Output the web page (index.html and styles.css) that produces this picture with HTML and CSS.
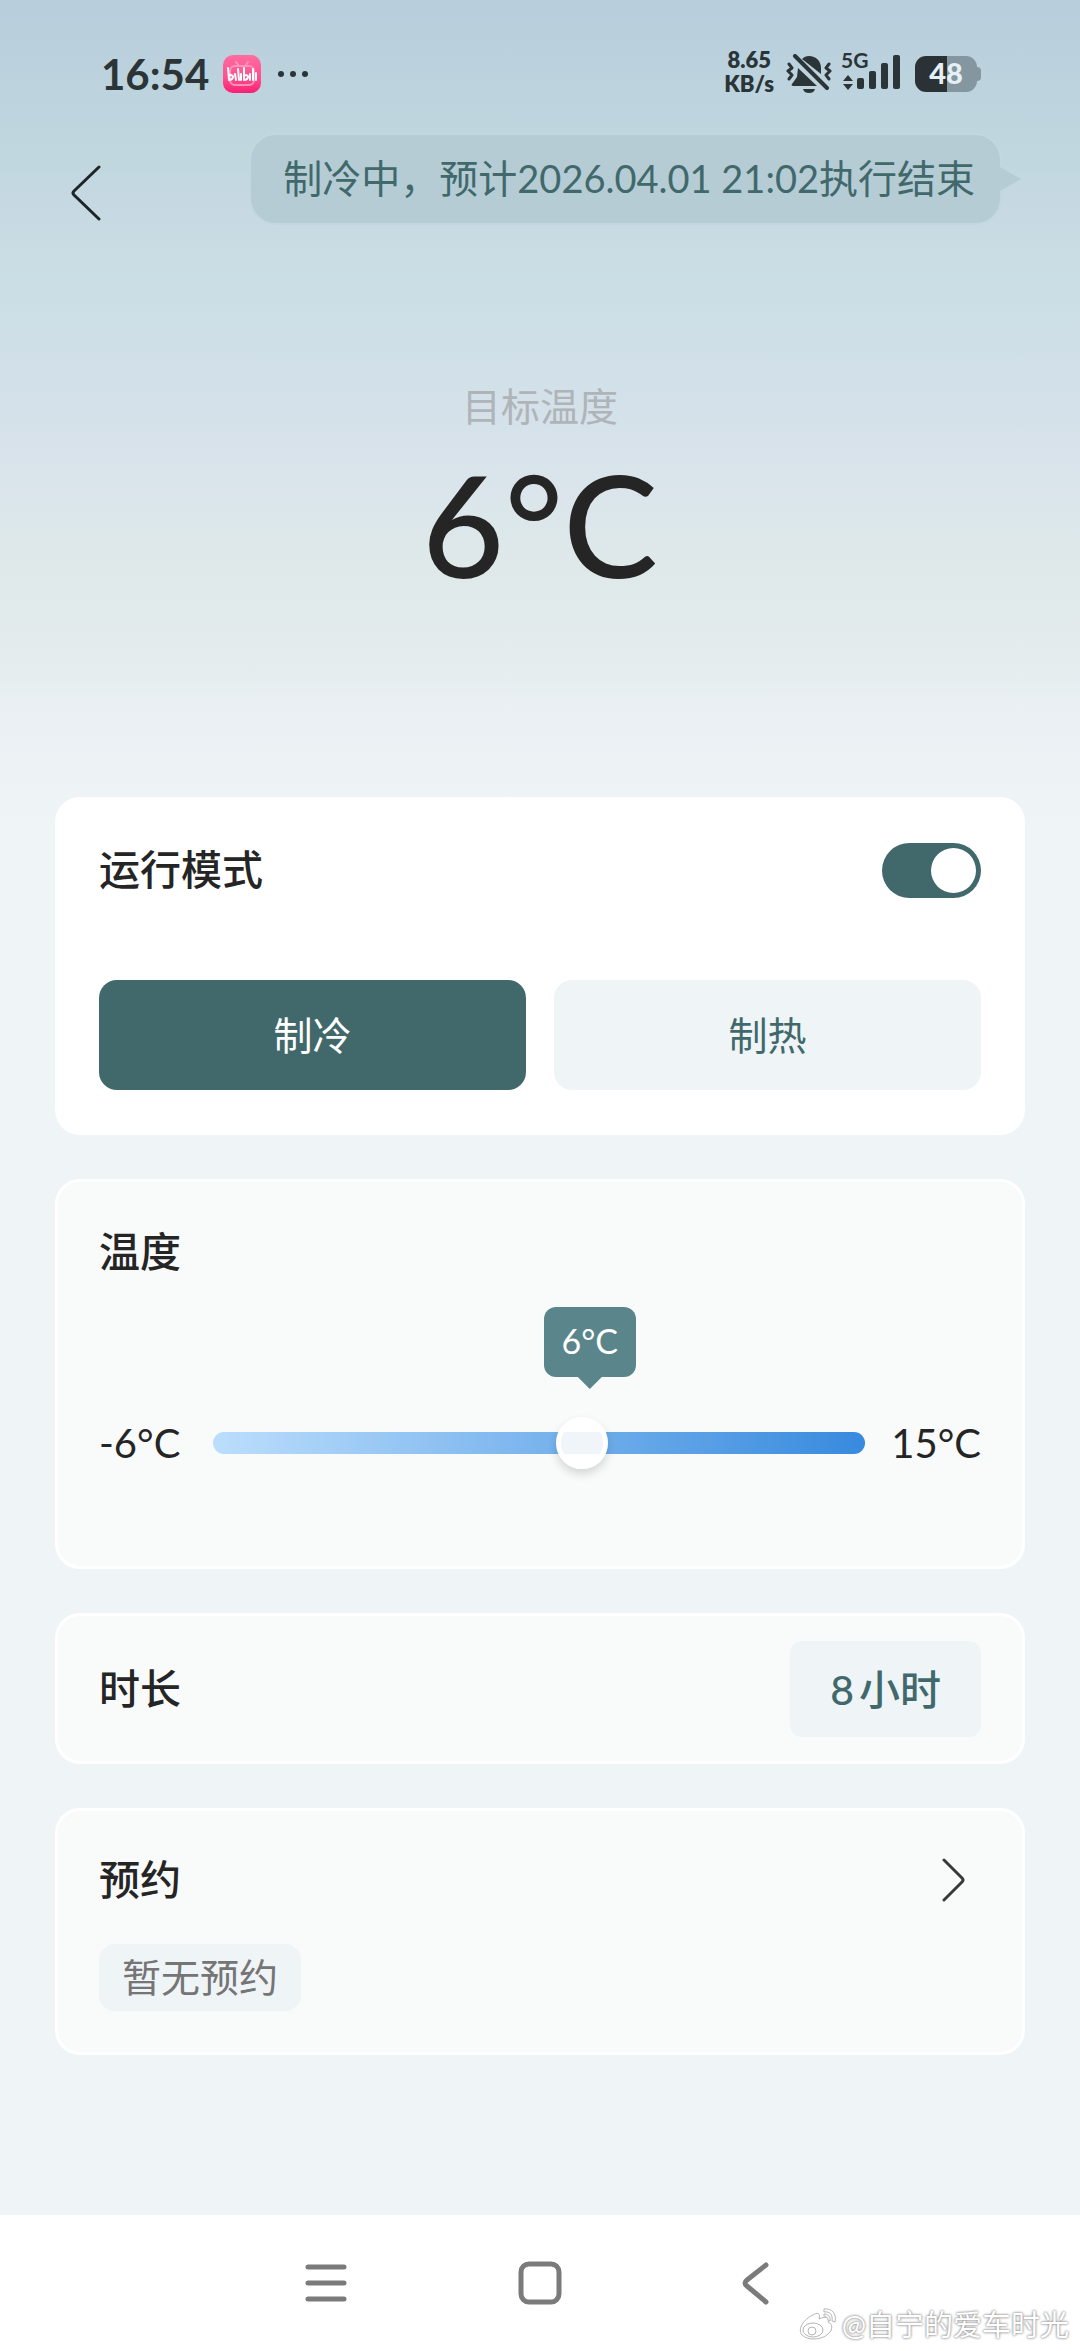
FILE: index.html
```html
<!DOCTYPE html>
<html lang="zh-CN">
<head>
<meta charset="utf-8">
<meta name="viewport" content="width=device-width, initial-scale=1">
<title>目标温度</title>
<link rel="stylesheet" href="styles.css">
</head>
<body>
<div class="screen">
  <div class="status">
    <div class="status-side">
      <span class="clock">16:54</span>
      <svg class="app-icon" viewBox="0 0 38 38" aria-hidden="true">
        <defs><linearGradient id="pink" x1="0" y1="0" x2="0" y2="1"><stop offset="0" stop-color="#ff6da0"/><stop offset=".6" stop-color="#ff4f8d"/><stop offset="1" stop-color="#fb1f74"/></linearGradient></defs>
        <rect width="38" height="38" rx="10" fill="url(#pink)"/>
        <g fill="none" stroke="#ff94b8" stroke-width="2" stroke-linecap="round"><rect x="7" y="11" width="24" height="19" rx="5"/><path d="M13 7l3 4M25 7l-3 4"/></g>
        <g fill="none" stroke="#fff" stroke-width="2" stroke-linecap="round" stroke-linejoin="round"><path d="M5 13l1 12c4 0 6-5 1-5M12 19l1 6M15 14l1 11M18 19v6M21 13v12c4 0 6-5 1-5M27 19v6M30 14v11M33 18v7"/></g>
      </svg>
      <svg class="dots" viewBox="0 0 30 6" aria-hidden="true"><g fill="#2b3538"><circle cx="3" cy="3" r="3"/><circle cx="15" cy="3" r="3"/><circle cx="27" cy="3" r="3"/></g></svg>
    </div>
    <div class="status-side">
      <div class="speed"><span>8.65</span><span>KB/s</span></div>
      <svg class="bell" viewBox="0 0 46 40" aria-hidden="true">
        <g fill="#2b3538"><path d="M12 14l19 18H7c-1 0-2-1-1-2l5-7z"/><path d="M16 5c2-2 4-3 7-3 7 0 12 5 12 12v6z"/><path d="M17 35h12c-1 3-3 4-6 4s-5-1-6-4z"/></g>
        <g fill="none" stroke="#2b3538" stroke-linecap="round" stroke-linejoin="round"><path d="M9 2l32 32" stroke-width="4"/><path d="M3 10l3 4-4 3 4 4-3 4M43 10l-3 4 4 3-4 4 3 4" stroke-width="3"/></g>
      </svg>
      <div class="signal">
        <span class="net">5G</span>
        <svg viewBox="0 0 60 40" aria-hidden="true"><g fill="#2b3538"><path d="M7 21l5 6H2zM7 36l5-6H2z"/><rect x="16" y="24" width="7" height="11" rx="2"/><rect x="28" y="17" width="7" height="18" rx="2"/><rect x="40" y="9" width="7" height="26" rx="2"/><rect x="52" y="1" width="7" height="34" rx="2"/></g></svg>
      </div>
      <div class="battery"><span class="battery-body">48</span><span class="battery-cap"></span></div>
    </div>
  </div>

  <header class="top">
    <button class="back" aria-label="返回"><svg viewBox="0 0 30 56" aria-hidden="true"><path d="M28 2L3 26q-2 2 0 4L28 54"/></svg></button>
    <p class="notice">制冷中，预计<span class="notice-time">2026.04.01 21:02</span>执行结束</p>
  </header>

  <section class="target">
    <h1>目标温度</h1>
    <output class="target-value">6°C</output>
  </section>

  <main class="cards">
    <section class="card card-mode">
      <div class="row">
        <label class="title" for="power">运行模式</label>
        <input class="switch" id="power" type="checkbox" role="switch" checked>
      </div>
      <div class="modes">
        <button class="mode mode-on" aria-pressed="true">制冷</button>
        <button class="mode" aria-pressed="false">制热</button>
      </div>
    </section>

    <section class="card card-temp">
      <label class="title" for="temp">温度</label>
      <div class="slider-row">
        <span class="limit">-6°C</span>
        <div class="slider">
          <output class="tip" for="temp">6°C</output>
          <input class="range" id="temp" type="range" min="-6" max="15" value="6">
        </div>
        <span class="limit">15°C</span>
      </div>
    </section>

    <section class="card card-time">
      <h2 class="title">时长</h2>
      <button class="hours"><span class="num">8</span>小时</button>
    </section>

    <section class="card card-book">
      <a class="row" href="#booking">
        <span class="title">预约</span>
        <svg class="chevron" viewBox="0 0 24 44" aria-hidden="true"><path d="M2 2l18 18q2 2 0 4L2 42"/></svg>
      </a>
      <p class="tag">暂无预约</p>
    </section>
  </main>

  <nav class="system">
    <button aria-label="最近任务"><svg viewBox="0 0 44 44" aria-hidden="true"><path d="M4 6h36M4 22h36M4 38h36"/></svg></button>
    <button aria-label="主屏幕"><svg viewBox="0 0 44 44" aria-hidden="true"><rect x="3" y="3" width="38" height="38" rx="8"/></svg></button>
    <button aria-label="返回上一级"><svg viewBox="0 0 44 44" aria-hidden="true"><path d="M34 4L15 19q-4 3 0 6L34 41"/></svg></button>
    <div class="credit">
      <svg viewBox="0 0 40 36" aria-hidden="true"><g fill="#fff" stroke="#b5b5b5" stroke-width="1"><path d="M15 8c4-3 8-2 6 4 6-3 11-2 9 3 5 2 5 8 0 12-6 6-20 7-26 1C-1 22 6 12 15 8z"/><ellipse cx="15" cy="23" rx="10" ry="7"/><circle cx="14" cy="24" r="4"/><path d="M26 2c8-1 13 5 11 13l-3-1c1-6-2-10-8-9zM26 7c4 0 7 3 6 7l-2-1c0-2-2-4-4-4z"/></g></svg>
      <span>@自宁的爱车时光</span>
    </div>
  </nav>
</div>
</body>
</html>
```

FILE: styles.css
```css
* { box-sizing: border-box; }

body {
  margin: 0;
  background: #eff4f7;
  color: #252525;
  font-family: Lato, "Noto Sans CJK SC", sans-serif;
  font-size: 39px;
}

h1, h2, p { margin: 0; font-weight: 400; }

button {
  margin: 0;
  padding: 0;
  border: 0;
  background: none;
  color: inherit;
  font: inherit;
}

svg { display: block; }

.screen {
  display: flex;
  flex-direction: column;
  min-height: 100vh;
  background: linear-gradient(#b7cddb 0, #bed5df 110px, #c0d7de 160px, #c6d9e2 200px, #cadee5 280px, #cfdfe8 350px, #d9e3eb 460px, #dce7eb 520px, #dfe9ea 570px, #e4ecee 660px, #e9eff2 700px, #eff4f7 820px);
}

/* status bar */
.status {
  display: flex;
  justify-content: space-between;
  align-items: center;
  height: 100px;
  margin-top: 24px;
  padding: 0 99px 0 101px;
  color: #2b3538;
  font-weight: 700;
}
.status-side { display: flex; align-items: center; height: 50px; }
.clock { font-size: 42px; line-height: 50px; }
.app-icon { width: 38px; margin-left: 14px; }
.dots { width: 30px; margin-left: 17px; }
.speed { display: flex; flex-direction: column; align-items: center; padding-bottom: 4px; font-size: 22px; line-height: 24px; font-weight: 800; }
.bell { width: 46px; height: 40px; margin-left: 12px; }
.signal { position: relative; width: 60px; height: 40px; margin-left: 9px; }
.net { position: absolute; left: 0; top: -6px; font-size: 21px; line-height: 24px; }
.battery { display: flex; align-items: center; margin-left: 14px; }
.battery-body {
  width: 62px;
  height: 36px;
  border-radius: 11px;
  background: linear-gradient(90deg, #2b3235 52%, #84969f 52%);
  color: #e6eff3;
  font-size: 29px;
  font-weight: 900;
  line-height: 34px;
  text-align: center;
}
.battery-cap { width: 4px; height: 14px; border-radius: 0 4px 4px 0; background: #84969f; }

/* header */
.top { display: flex; justify-content: space-between; padding: 9px 78px 0 71px; }
.back { width: 30px; height: 56px; margin-top: 32px; }
.back svg { width: 30px; fill: none; stroke: #1f2426; stroke-width: 3; stroke-linecap: round; }
.notice {
  position: relative;
  height: 92px;
  padding: 0 25px 0 32px;
  border: 2px solid #c2d8e1;
  border-radius: 27px;
  background: #b5ccd5;
  color: #41696c;
  line-height: 87px;
  white-space: nowrap;
}
.notice::after {
  content: "";
  position: absolute;
  left: 100%;
  top: 32px;
  width: 21px;
  height: 24px;
  background: #b5ccd5;
  clip-path: polygon(0 0, 100% 50%, 0 100%);
}
.notice-time { font-size: 38px; }

/* target temperature */
.target { display: flex; flex-direction: column; align-items: center; margin-top: 153px; }
.target h1 { color: #afb4b8; font-size: 39px; line-height: 56px; }
.target-value { margin-top: 2px; font-size: 142px; line-height: 174px; font-weight: 500; }

/* cards */
.cards { display: flex; flex-direction: column; gap: 44px; margin-top: 187px; padding: 0 55px; }
.card { padding: 0 41px; border: 3px solid #fff; border-radius: 25px; background: #f9fbfa; }
.title { font-size: 41px; line-height: 60px; font-weight: 500; }
.row { display: flex; justify-content: space-between; align-items: center; color: inherit; text-decoration: none; }

.card-mode { padding-top: 40px; padding-bottom: 42px; background: #fff; }
.switch {
  appearance: none;
  width: 99px;
  height: 55px;
  margin: 0;
  padding: 5px;
  border-radius: 28px;
  background: #41696c;
}
.switch::before { content: ""; display: block; width: 45px; height: 45px; margin-left: auto; border-radius: 50%; background: #fff; }
.modes { display: grid; grid-template-columns: 1fr 1fr; gap: 28px; margin-top: 80px; }
.mode { height: 110px; padding-bottom: 5px; border-radius: 18px; background: #eff4f7; color: #41696c; }
.mode-on { background: #41696c; color: #fff; }

.card-temp { padding-top: 40px; padding-bottom: 93px; }
.card-temp .title { display: block; }
.slider-row { display: flex; align-items: center; gap: 26px; margin-top: 131px; }
.limit { min-width: 88px; font-size: 40px; line-height: 60px; }
.slider { position: relative; flex: 1; height: 52px; }
.range { appearance: none; display: block; width: 100%; height: 52px; margin: 0; background: none; }
.range::-webkit-slider-runnable-track { height: 22px; border-radius: 11px; background: linear-gradient(90deg, #bcdefc, #378ade); }
.range::-webkit-slider-thumb {
  appearance: none;
  width: 52px;
  height: 52px;
  margin-top: -15px;
  border: 5px solid #fff;
  border-radius: 50%;
  background: linear-gradient(#fff 10px, #f0f5fa 10px, #f0f5fa 32px, #fff 32px);
  box-shadow: 0 5px 10px #00000026;
}
.tip {
  position: absolute;
  left: 57%;
  bottom: 92px;
  width: 92px;
  height: 70px;
  margin-left: -41px;
  border-radius: 12px;
  background: #5a868b;
  color: #fff;
  font-size: 34px;
  line-height: 68px;
  text-align: center;
}
.tip::after {
  content: "";
  position: absolute;
  left: 34px;
  top: 100%;
  width: 24px;
  height: 12px;
  background: #5a868b;
  clip-path: polygon(0 0, 100% 0, 50% 100%);
}

.card-time { display: flex; justify-content: space-between; align-items: center; padding-top: 25px; padding-bottom: 24px; }
.hours { height: 96px; padding: 0 40px 4px; border-radius: 12px; background: #eff4f7; color: #41696c; font-size: 41px; font-weight: 500; }
.num { margin-right: 5px; }

.card-book { padding-top: 39px; padding-bottom: 41px; }
.chevron { width: 24px; margin-right: 15px; fill: none; stroke: #3a3a3a; stroke-width: 3; stroke-linecap: round; }
.tag {
  width: fit-content;
  margin-top: 34px;
  padding: 0 23px;
  border-radius: 16px;
  background: #eff4f7;
  color: #757575;
  line-height: 67px;
}

/* system navigation */
.system {
  position: relative;
  display: flex;
  justify-content: center;
  gap: 170px;
  height: 136px;
  margin-top: auto;
  padding-top: 46px;
  background: #fff;
}
.system button { width: 44px; height: 44px; }
.system button svg { fill: none; stroke: #7b7b7b; stroke-width: 5; stroke-linecap: round; }
.credit {
  position: absolute;
  right: 11px;
  bottom: 6px;
  display: flex;
  align-items: center;
  gap: 4px;
  color: #fff;
  font-size: 29px;
  line-height: 40px;
  text-shadow: 0 0 3px #888, 0 0 2px #999;
}
.credit svg { width: 40px; }
```
